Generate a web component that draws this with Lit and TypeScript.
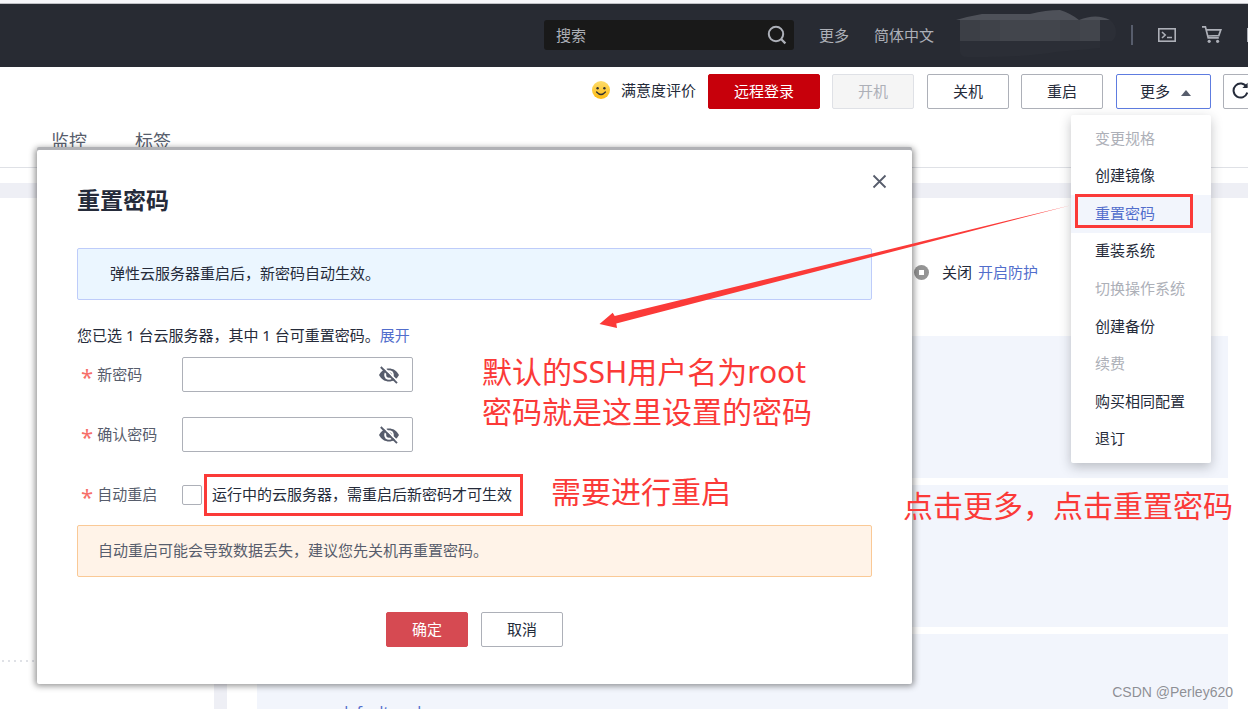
import { LitElement, html, css, svg } from "lit";
import { customElement } from "lit/decorators.js";
import { classMap } from "lit/directives/class-map.js";

interface MenuItem {
  label: string;
  disabled?: boolean;
  active?: boolean;
}

const MENU: MenuItem[] = [
  { label: "变更规格", disabled: true },
  { label: "创建镜像" },
  { label: "重置密码", active: true },
  { label: "重装系统" },
  { label: "切换操作系统", disabled: true },
  { label: "创建备份" },
  { label: "续费", disabled: true },
  { label: "购买相同配置" },
  { label: "退订" },
];

const base = css`
  * {
    box-sizing: border-box;
  }
  button,
  input {
    font: inherit;
    color: inherit;
    margin: 0;
  }
  a {
    color: #526ecc;
    text-decoration: none;
  }
  svg {
    display: block;
  }
  .btn {
    height: 35px;
    min-width: 82px;
    padding: 0 0 2px;
    border: 1px solid #adb0b8;
    border-radius: 2px;
    background: #fff;
    color: #252b3a;
    text-align: center;
  }
`;

@customElement("top-bar")
class TopBar extends LitElement {
  static styles = [
    base,
    css`
      :host {
        display: block;
        border-top: 3px solid #f7f7fa;
      }
      .bar {
        display: flex;
        align-items: center;
        justify-content: flex-end;
        gap: 25px;
        height: 64px;
        padding-bottom: 2px;
        border-top: 1px solid #c0c1c6;
        background: #282b33;
        color: #adb0b8;
        overflow: hidden;
      }
      .search {
        display: flex;
        align-items: center;
        width: 250px;
        height: 30px;
        padding: 0 7px 0 12px;
        border-radius: 3px;
        background: #191919;
      }
      .search input {
        flex: 1;
        min-width: 0;
        padding: 0;
        border: 0;
        outline: 0;
        background: none;
      }
      .search input::placeholder {
        color: #adb0b8;
        opacity: 1;
      }
      .icon-btn {
        padding: 0;
        border: 0;
        background: none;
        color: #adb0b8;
      }
      .bar a {
        color: #adb0b8;
      }
      .account {
        margin-left: -3px;
      }
      .tools {
        display: flex;
        align-items: center;
        gap: 25px;
        margin-right: -17px;
      }
      .rule {
        width: 2px;
        height: 20px;
        margin-left: -10px;
        background: #575d6c;
      }
      .cli {
        margin-right: 1px;
      }
    `,
  ];

  render() {
    return html`
      <header class="bar">
        <form class="search" role="search">
          <input type="text" aria-label="搜索" placeholder="搜索" />
          <button class="icon-btn" type="button" aria-label="搜索">
            <svg width="20" height="20" viewBox="0 0 20 20" fill="none" stroke="currentColor">
              <circle cx="9" cy="9" r="7.2" stroke-width="2" />
              <path d="M14 14l4.4 4.4" stroke-width="2.2" />
            </svg>
          </button>
        </form>
        <a href="#">更多</a>
        <a href="#">简体中文</a>
        <svg class="account" width="160" height="50" viewBox="0 0 160 50" aria-hidden="true">
          <path
            d="M0 10Q14 6 26 4H74Q90 0 104 0Q114 3 123 10Q140 3 154 10Z"
            fill="#4e5159"
          />
          <path d="M144 10h10q6 5 6 12q0 6-4 9h-12z" fill="#2c2f37" />
          <path d="M4 31H144V38Q124 40 100 42Q70 47 30 47H12Q4 47 4 42Z" fill="#2b2e36" />
          <rect x="4" y="10" width="20" height="21" fill="#3c3f46" />
          <rect x="24" y="10" width="20" height="21" fill="#3f4249" />
          <rect x="44" y="10" width="20" height="21" fill="#42454c" />
          <rect x="64" y="10" width="40" height="21" fill="#42454c" />
          <rect x="104" y="10" width="20" height="21" fill="#3f4249" />
          <rect x="124" y="10" width="20" height="21" fill="#42454c" />
        </svg>
        <div class="tools">
          <span class="rule"></span>
          <button class="icon-btn cli" type="button" aria-label="CLI">
            <svg width="18" height="14" viewBox="0 0 18 14" fill="none" stroke="currentColor" stroke-width="1.6">
              <rect x="0.8" y="0.8" width="16.4" height="12.4" />
              <path d="M4 4l3.2 3L4 10M9 9.5h5" />
            </svg>
          </button>
          <button class="icon-btn" type="button" aria-label="购物车">
            <svg width="20" height="17" viewBox="0 0 20 17" fill="none" stroke="currentColor" stroke-width="1.7">
              <path d="M0 .9h3.4l2.8 11h10.6M4.2 3.8h14.6l-2 5.8L5.8 10" />
              <circle cx="7.2" cy="15.3" r="1.6" fill="currentColor" stroke="none" />
              <circle cx="15.6" cy="15.3" r="1.6" fill="currentColor" stroke="none" />
            </svg>
          </button>
          <button class="icon-btn" type="button" aria-label="费用">
            <svg width="18" height="14" viewBox="0 0 18 14" fill="none" stroke="currentColor" stroke-width="2">
              <rect x="1" y="1" width="16" height="12" />
            </svg>
          </button>
        </div>
      </header>
    `;
  }
}

@customElement("server-actions")
class ServerActions extends LitElement {
  static styles = [
    base,
    css`
      :host {
        display: block;
        overflow: visible;
      }
      .row {
        display: flex;
        align-items: center;
        justify-content: flex-end;
        gap: 12px;
        margin-right: -10px;
        padding-top: 7px;
      }
      .rate {
        display: flex;
        align-items: center;
        gap: 11px;
        height: 31px;
        align-self: flex-start;
        color: #252b3a;
      }
      .power {
        display: flex;
        gap: 12px;
        margin-right: 1px;
      }
      .primary {
        width: 112px;
        border-color: #c7000b;
        background: #c7000b;
        color: #fff;
      }
      .btn:disabled {
        border-color: #dfe1e6;
        background: #f5f5f5;
        color: #adb0b8;
      }
      .more {
        position: relative;
        margin-left: 1px;
      }
      .more .btn {
        display: flex;
        align-items: center;
        justify-content: center;
        gap: 11px;
        width: 95px;
        padding-left: 4px;
        border-color: #5e7ce0;
      }
      .caret {
        margin-top: 4px;
      }
      .refresh {
        min-width: 35px;
        padding-left: 8px;
      }
      .menu {
        position: absolute;
        z-index: 3;
        top: 41px;
        right: 0;
        display: grid;
        grid-auto-rows: 1fr;
        width: 140px;
        height: 348px;
        margin: 0;
        padding: 5px 0;
        border-radius: 2px;
        background: #fff;
        box-shadow: 0 4px 12px rgba(40, 43, 51, 0.28);
        list-style: none;
      }
      .item {
        width: 100%;
        height: 100%;
        padding: 0 0 2px 24px;
        border: 0;
        background: none;
        color: #252b3a;
        text-align: left;
      }
      .item:disabled {
        color: #adb0b8;
      }
      .item.active {
        background: #f2f5fc;
        color: #526ecc;
      }
    `,
  ];

  render() {
    return html`
      <div class="row">
        <span class="rate">
          <svg width="18" height="18" viewBox="0 0 18 18">
            <defs>
              <linearGradient id="face" x1="0" y1="0" x2="0" y2="1">
                <stop offset="0" stop-color="#fddc6c" />
                <stop offset="1" stop-color="#fdbb12" />
              </linearGradient>
            </defs>
            <circle cx="9" cy="9" r="9" fill="url(#face)" />
            <circle cx="5.6" cy="7.2" r="1.2" fill="#333" />
            <circle cx="12.4" cy="7.2" r="1.2" fill="#333" />
            <path d="M4.6 11q4.4 5 8.8 0" fill="none" stroke="#333" stroke-width="1.3" stroke-linecap="round" />
          </svg>
          满意度评价
        </span>
        <div class="power">
          <button class="btn primary" type="button">远程登录</button>
          <button class="btn" type="button" disabled>开机</button>
        </div>
        <button class="btn" type="button">关机</button>
        <button class="btn" type="button">重启</button>
        <div class="more">
          <button class="btn" type="button" aria-expanded="true">
            更多
            <svg class="caret" width="10" height="6" viewBox="0 0 10 6"><path d="M5 0l5 6H0z" fill="#575d6c" /></svg>
          </button>
          <ul class="menu">
            ${MENU.map(
              (m) => html`<li>
                <button
                  type="button"
                  class=${classMap({ item: true, active: !!m.active })}
                  ?disabled=${m.disabled}
                >
                  ${m.label}
                </button>
              </li>`
            )}
          </ul>
        </div>
        <button class="btn refresh" type="button" aria-label="刷新">
          <svg width="17" height="17" viewBox="0 0 17 17" fill="none" stroke="#252b3a" stroke-width="2">
            <path d="M14.6 5A7 7 0 1 0 15.3 10.5" />
            <path d="M15.6 .8v5.2h-5.2z" fill="#252b3a" stroke="none" />
          </svg>
        </button>
      </div>
    `;
  }
}

@customElement("reset-dialog")
class ResetDialog extends LitElement {
  static styles = [
    base,
    css`
      :host {
        display: block;
        padding: 36px 40px 37px;
        border-radius: 2px;
        background: #fff;
        box-shadow: 0 -3px 0 #b0b1b5, 0 0 6px 2px rgba(0, 0, 0, 0.42);
        color: #252b3a;
      }
      .head {
        display: flex;
        align-items: flex-start;
        justify-content: space-between;
        height: 30px;
      }
      .title {
        margin: 0;
        font-size: 23px;
        line-height: 28px;
        font-weight: 700;
      }
      .close {
        margin: -12px -15px 0 0;
        padding: 0;
        border: 0;
        background: none;
      }
      .note {
        margin: 32px 0 0;
        padding: 0 32px 2px;
        border: 1px solid #beccfa;
        border-radius: 2px;
        background: #ebf6ff;
        line-height: 48px;
      }
      .warn {
        margin-top: 13px;
        padding: 0 20px 2px;
        border-color: #fac996;
        background: #fff3e8;
        color: #575d6c;
      }
      .summary {
        margin: 20px 0 7px;
        line-height: 30px;
      }
      .fields {
        display: grid;
        gap: 25px;
      }
      .field {
        display: flex;
        align-items: center;
        height: 35px;
      }
      .field label,
      .name {
        padding-bottom: 2px;
      }
      .field .name {
        display: flex;
        align-items: center;
        gap: 4px;
        width: 105px;
        padding-left: 4px;
        color: #575d6c;
      }
      .star {
        height: 20px;
        color: #f66f6a;
        font-size: 22px;
        line-height: 24px;
      }
      .pwd {
        display: flex;
        align-items: center;
        width: 231px;
        height: 35px;
        padding: 0 13px 0 10px;
        border: 1px solid #adb0b8;
        border-radius: 2px;
      }
      .pwd input {
        flex: 1;
        min-width: 0;
        padding: 0;
        border: 0;
        outline: 0;
        background: none;
      }
      .eye {
        padding: 0;
        border: 0;
        background: none;
      }
      .check {
        appearance: none;
        width: 20px;
        height: 20px;
        margin-right: 10px;
        border: 1px solid #adb0b8;
        border-radius: 2px;
        background: #fff;
      }
      .foot {
        display: flex;
        justify-content: center;
        gap: 13px;
        margin-top: 35px;
      }
      .ok {
        border-color: #d64a52;
        background: #d64a52;
        color: #fff;
      }
    `,
  ];

  private password(id: string, label: string) {
    return html`<div class="field">
      <label class="name" for=${id}><span class="star">*</span>${label}</label>
      <span class="pwd">
        <input id=${id} type="password" />
        <button class="eye" type="button" aria-label="显示密码">
          <svg width="20" height="18" viewBox="0 0 20 18" fill="none">
            <path d="M0 9C2.5 4.5 6 2.5 10 2.5S17.5 4.5 20 9C17.5 13.5 14 15.5 10 15.5S2.5 13.5 0 9Z" fill="#575d6c" />
            <circle cx="10" cy="9" r="4.8" fill="#fff" />
            <circle cx="10" cy="9" r="2.8" fill="#575d6c" />
            <path d="M3.3 0L19.5 16.2" stroke="#fff" stroke-width="1.8" />
            <path d="M1.8 1L18 17.2" stroke="#575d6c" stroke-width="1.9" />
          </svg>
        </button>
      </span>
    </div>`;
  }

  render() {
    return html`
      <div class="head">
        <h2 class="title">重置密码</h2>
        <button class="close" type="button" aria-label="关闭">
          <svg width="15" height="15" viewBox="0 0 15 15" stroke="#575d6c" stroke-width="1.8">
            <path d="M1.5 1.5l12 12M13.5 1.5l-12 12" />
          </svg>
        </button>
      </div>
      <p class="note">弹性云服务器重启后，新密码自动生效。</p>
      <p class="summary">您已选 1 台云服务器，其中 1 台可重置密码。<a href="#">展开</a></p>
      <div class="fields">
        ${this.password("pwd", "新密码")} ${this.password("confirm", "确认密码")}
        <div class="field">
          <span class="name"><span class="star">*</span>自动重启</span>
          <input class="check" id="auto" type="checkbox" />
          <label for="auto">运行中的云服务器，需重启后新密码才可生效</label>
        </div>
      </div>
      <p class="note warn">自动重启可能会导致数据丢失，建议您先关机再重置密码。</p>
      <div class="foot">
        <button class="btn ok" type="button">确定</button>
        <button class="btn" type="button">取消</button>
      </div>
    `;
  }
}

@customElement("app-root")
class AppRoot extends LitElement {
  static styles = [
    base,
    css`
      :host {
        position: relative;
        display: flex;
        flex-direction: column;
        height: 100vh;
        overflow: hidden;
        background: #fff;
        color: #252b3a;
        font: 15px/20px "Noto Sans", "Noto Sans CJK SC", sans-serif;
      }
      .tabs {
        display: flex;
        gap: 48px;
        padding: 16px 51px 10px;
        border-bottom: 1px solid #dfe1e6;
        font-size: 18px;
        line-height: 32px;
      }
      .tabs a {
        color: #575d6c;
      }
      .content {
        display: flex;
        flex: 1;
        min-height: 0;
        margin-top: 15px;
        border-top: 15px solid #eeeff5;
      }
      .side {
        flex: none;
        width: 214px;
        padding-top: 462px;
      }
      .dots {
        height: 2px;
        margin-left: 2px;
        background: repeating-linear-gradient(90deg, #dfe1e6 0 2px, transparent 2px 6px);
      }
      .detail {
        flex: 1;
        min-width: 0;
        padding: 64px 20px 0 30px;
        border-left: 13px solid #eeeff5;
      }
      .guard {
        display: flex;
        align-items: center;
        justify-content: flex-end;
        gap: 6px;
        margin: 0 190px 54px 0;
      }
      .guard svg {
        margin-right: 7px;
      }
      .cards {
        display: grid;
        gap: 7px;
      }
      .card {
        height: 142px;
        padding: 67px 82px 0;
        background: #f2f5fc;
      }
      .dialog {
        position: absolute;
        z-index: 2;
        top: 150px;
        left: 37px;
        width: 875px;
      }
      .layer {
        position: absolute;
        z-index: 4;
        top: 0;
        left: 0;
        pointer-events: none;
      }
      .mark {
        position: absolute;
        z-index: 4;
        border: 3px solid #fb3a38;
        pointer-events: none;
      }
      .mark-menu {
        top: 194px;
        right: 55px;
        width: 118px;
        height: 34px;
      }
      .mark-check {
        top: 474px;
        left: 204px;
        width: 319px;
        height: 42px;
      }
      .say {
        position: absolute;
        z-index: 4;
        margin: 0;
        color: #fb3a38;
        font-size: 30px;
        line-height: 40px;
        white-space: nowrap;
      }
      .say-user {
        top: 352px;
        left: 482px;
      }
      .say-restart {
        top: 472px;
        left: 551px;
      }
      .say-menu {
        top: 486px;
        right: 15px;
      }
      .credit {
        position: absolute;
        z-index: 4;
        right: 15px;
        bottom: 7px;
        color: #8d8f96;
        font-family: "Liberation Sans", Arial, sans-serif;
        font-size: 14px;
        text-shadow: 0 0 1px #fff;
      }
    `,
  ];

  render() {
    return html`
      <top-bar></top-bar>
      <server-actions></server-actions>
      <nav class="tabs">
        <a href="#">监控</a>
        <a href="#">标签</a>
      </nav>
      <main class="content">
        <aside class="side"><div class="dots"></div></aside>
        <section class="detail">
          <div class="guard">
            <svg width="15" height="15" viewBox="0 0 15 15">
              <circle cx="7.5" cy="7.5" r="7.5" fill="#949494" />
              <rect x="5" y="5" width="5" height="5" fill="#fff" />
            </svg>
            <span>关闭</span>
            <a href="#">开启防护</a>
          </div>
          <div class="cards">
            <div class="card"></div>
            <div class="card"></div>
            <div class="card"><a href="#">default-pod</a></div>
          </div>
        </section>
      </main>
      <reset-dialog class="dialog" role="dialog" aria-label="重置密码"></reset-dialog>
      <svg class="layer" width="1080" height="340" viewBox="0 0 1080 340" aria-hidden="true">
        ${svg`<path d="M599.5 324L612.7 312.7L614.7 316L1070 205.5L616.3 323.5L617 328Z" fill="#fb3a38" />`}
      </svg>
      <div class="mark mark-menu"></div>
      <div class="mark mark-check"></div>
      <p class="say say-user">默认的SSH用户名为root<br />密码就是这里设置的密码</p>
      <p class="say say-restart">需要进行重启</p>
      <p class="say say-menu">点击更多，点击重置密码</p>
      <span class="credit">CSDN @Perley620</span>
    `;
  }
}
